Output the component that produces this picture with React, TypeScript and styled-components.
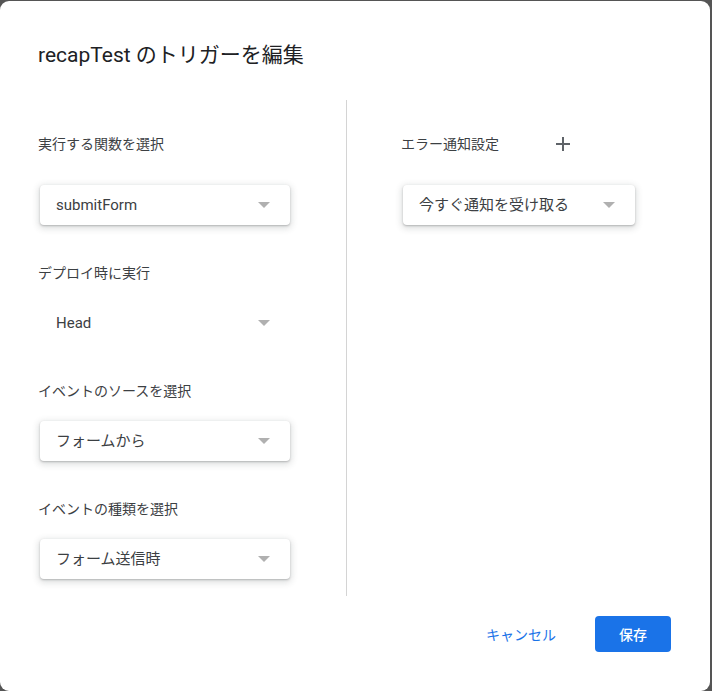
import React from "react";
import styled, { createGlobalStyle } from "styled-components";

const GlobalStyle = createGlobalStyle`
  html, body {
    margin: 0;
    padding: 0;
    background: #555555;
  }
  body {
    font-family: Roboto, "Noto Sans CJK JP", sans-serif;
    color: #3c4043;
  }
`;

const Dialog = styled.div`
  margin-top: 1px;
  width: 710px;
  height: 690px;
  box-sizing: border-box;
  background: #ffffff;
  border-radius: 9px;
  display: flex;
  flex-direction: column;
  padding: 40px 39px 0 38px;
`;

const Title = styled.h2`
  margin: 0;
  font-size: 21px;
  line-height: 28px;
  font-weight: 400;
  color: #202124;
`;

const Body = styled.div`
  margin: 31px -39px 0 -38px;
  height: 496px;
  display: flex;
`;

const Column = styled.div<{ $left: number }>`
  flex: 1;
  box-sizing: border-box;
  padding: 23px 0 0 ${(p) => p.$left}px;
  display: flex;
  flex-direction: column;
  gap: 38px;
`;

const LeftColumn = styled(Column)`
  flex: 0 0 346px;
`;

const Divider = styled.div`
  flex: 0 0 1px;
  background: #d4d4d4;
`;

const Field = styled.div`
  display: flex;
  flex-direction: column;
  gap: 20px;
`;

const LabelRow = styled.div<{ $tall?: boolean }>`
  height: ${(p) => (p.$tall ? 42 : 20)}px;
  display: flex;
  align-items: center;
  gap: 44px;
`;

const Label = styled.span`
  font-size: 14px;
  line-height: 20px;
  color: #3c4043;
`;

const IconButton = styled.button`
  width: 40px;
  height: 40px;
  border: none;
  background: transparent;
  padding: 0;
  display: flex;
  align-items: center;
  justify-content: center;
  cursor: pointer;
`;

const Select = styled.div<{ $width: number; $flat?: boolean }>`
  margin-left: 2px;
  width: ${(p) => p.$width}px;
  height: 40px;
  box-sizing: border-box;
  border-radius: 4px;
  background: #ffffff;
  box-shadow: ${(p) =>
    p.$flat
      ? "none"
      : "0 1px 2px rgba(60, 64, 67, 0.3), 0 2px 6px 2px rgba(60, 64, 67, 0.15)"};
  display: flex;
  align-items: center;
  justify-content: space-between;
  padding: 0 20px 1px 16px;
  font-size: 15px;
  line-height: 20px;
  color: #3c4043;
`;

const Arrow = styled.span`
  width: 0;
  height: 0;
  border-left: 6px solid transparent;
  border-right: 6px solid transparent;
  border-top: 6px solid #b0b0b0;
`;

const Footer = styled.div`
  margin-top: 20px;
  display: flex;
  justify-content: flex-end;
  align-items: center;
  gap: 23px;
`;

const TextButton = styled.button`
  height: 36px;
  padding: 0 16px;
  border: none;
  background: transparent;
  color: #1a73e8;
  font-family: inherit;
  font-size: 14px;
  cursor: pointer;
`;

const PrimaryButton = styled.button`
  height: 36px;
  padding: 0 24px;
  border: none;
  border-radius: 4px;
  background: #1a73e8;
  color: #ffffff;
  font-family: inherit;
  font-size: 14px;
  font-weight: 500;
  cursor: pointer;
`;

const Dropdown = ({ value, width, flat }: { value: string; width: number; flat?: boolean }) => (
  <Select $width={width} $flat={flat}>
    <span>{value}</span>
    <Arrow />
  </Select>
);

const App = (): React.ReactElement => {
  return (
    <>
      <GlobalStyle />
      <Dialog>
        <Title>recapTest のトリガーを編集</Title>
        <Body>
          <LeftColumn $left={38}>
            <Field>
              <LabelRow $tall>
                <Label>実行する関数を選択</Label>
              </LabelRow>
              <Dropdown value="submitForm" width={250} />
            </Field>
            <Field>
              <LabelRow>
                <Label>デプロイ時に実行</Label>
              </LabelRow>
              <Dropdown value="Head" width={250} flat />
            </Field>
            <Field>
              <LabelRow>
                <Label>イベントのソースを選択</Label>
              </LabelRow>
              <Dropdown value="フォームから" width={250} />
            </Field>
            <Field>
              <LabelRow>
                <Label>イベントの種類を選択</Label>
              </LabelRow>
              <Dropdown value="フォーム送信時" width={250} />
            </Field>
          </LeftColumn>
          <Divider />
          <Column $left={54}>
            <Field>
              <LabelRow $tall>
                <Label>エラー通知設定</Label>
                <IconButton aria-label="追加">
                  <svg width="14" height="14" viewBox="0 0 14 14">
                    <path d="M7 0v14M0 7h14" stroke="#5f6368" strokeWidth="2" />
                  </svg>
                </IconButton>
              </LabelRow>
              <Dropdown value="今すぐ通知を受け取る" width={232} />
            </Field>
          </Column>
        </Body>
        <Footer>
          <TextButton>キャンセル</TextButton>
          <PrimaryButton>保存</PrimaryButton>
        </Footer>
      </Dialog>
    </>
  );
};

export default App;
